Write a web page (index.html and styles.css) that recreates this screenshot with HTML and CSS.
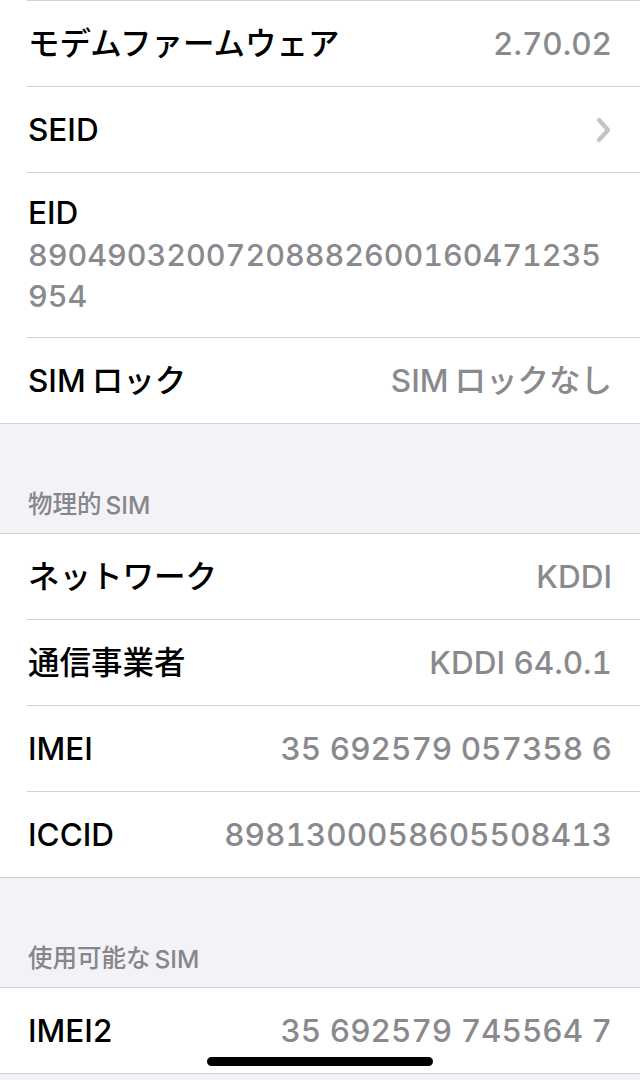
FILE: index.html
```html
<!DOCTYPE html>
<html>
<head>
  <title>情報</title>
  <link rel="stylesheet" href="styles.css">
</head>
<body>
  <div class="screen">
    <div class="group group-top">
      <div class="row">
        <div class="row-inner">
          <span class="label">モデムファームウェア</span>
          <span class="value">2.70.02</span>
        </div>
      </div>
      <div class="row">
        <div class="row-inner">
          <span class="label">SEID</span>
          <svg class="chevron" width="18" height="28" viewBox="0 0 18 28">
            <polyline points="4,4 13,14 4,24" fill="none" stroke="#c4c4c7" stroke-width="4.2" stroke-linecap="round" stroke-linejoin="round"/>
          </svg>
        </div>
      </div>
      <div class="row">
        <div class="row-inner stacked">
          <span class="label">EID</span>
          <span class="value long">89049032007208882600160471235954</span>
        </div>
      </div>
      <div class="row">
        <div class="row-inner">
          <span class="label"><span class="gap">SIM</span>ロック</span>
          <span class="value"><span class="gap">SIM</span>ロックなし</span>
        </div>
      </div>
    </div>

    <div class="section-header"><span class="gap-sm">物理的</span>SIM</div>
    <div class="group">
      <div class="row">
        <div class="row-inner">
          <span class="label">ネットワーク</span>
          <span class="value">KDDI</span>
        </div>
      </div>
      <div class="row">
        <div class="row-inner">
          <span class="label">通信事業者</span>
          <span class="value">KDDI 64.0.1</span>
        </div>
      </div>
      <div class="row">
        <div class="row-inner">
          <span class="label">IMEI</span>
          <span class="value">35 692579 057358 6</span>
        </div>
      </div>
      <div class="row">
        <div class="row-inner">
          <span class="label">ICCID</span>
          <span class="value">8981300058605508413</span>
        </div>
      </div>
    </div>

    <div class="section-header"><span class="gap-sm">使用可能な</span>SIM</div>
    <div class="group">
      <div class="row">
        <div class="row-inner">
          <span class="label">IMEI2</span>
          <span class="value">35 692579 745564 7</span>
        </div>
      </div>
    </div>

    <div class="home-indicator"></div>
  </div>
</body>
</html>
```

FILE: styles.css
```css
body {
  margin: 0;
  background-color: #f2f2f7;
  font-family: "Inter", "Noto Sans CJK JP", sans-serif;
}

.screen {
  position: relative;
  width: 640px;
  height: 1080px;
  overflow: hidden;
  background-color: #f2f2f7;
}

.group {
  background-color: #fff;
  border-top: 1px solid #d1d1d6;
  border-bottom: 1px solid #d1d1d6;
}

.group-top {
  border-top: none;
}

.group-top .row:first-child .row-inner {
  border-top: 1px solid #d1d1d6;
}

.row {
  padding-left: 27px;
}

.row-inner {
  display: flex;
  align-items: center;
  justify-content: space-between;
  min-height: 85px;
  padding-right: 28px;
  border-bottom: 1px solid #d1d1d6;
}

.row:last-child .row-inner {
  border-bottom: none;
}

.row-inner.stacked {
  flex-direction: column;
  align-items: flex-start;
  justify-content: flex-start;
  padding-top: 19px;
  padding-bottom: 21px;
  min-height: 0;
}

.label {
  font-size: 31.5px;
  font-weight: 500;
  color: #000;
  line-height: 42px;
  padding-left: 1px;
}

.value {
  font-size: 31.5px;
  font-weight: 500;
  color: #8a8a8e;
  line-height: 42px;
  font-variant-numeric: tabular-nums;
  white-space: nowrap;
}

.value.long {
  font-size: 30.5px;
  white-space: normal;
  word-break: break-all;
  line-height: 41px;
  padding-left: 1px;
}

/* small gap where latin meets kana, as iOS draws it */
.gap {
  margin-right: 6px;
}

.gap-sm {
  margin-right: 4px;
}

.chevron {
  display: block;
  margin-right: -1px;
}

.section-header {
  display: flex;
  align-items: flex-end;
  height: 109px;
  box-sizing: border-box;
  padding: 0 28px 13px;
  font-size: 24.5px;
  font-weight: 500;
  color: #86868b;
}

.home-indicator {
  position: absolute;
  left: 207px;
  top: 1057px;
  width: 226px;
  height: 9px;
  border-radius: 5px;
  background-color: #000;
}
```
